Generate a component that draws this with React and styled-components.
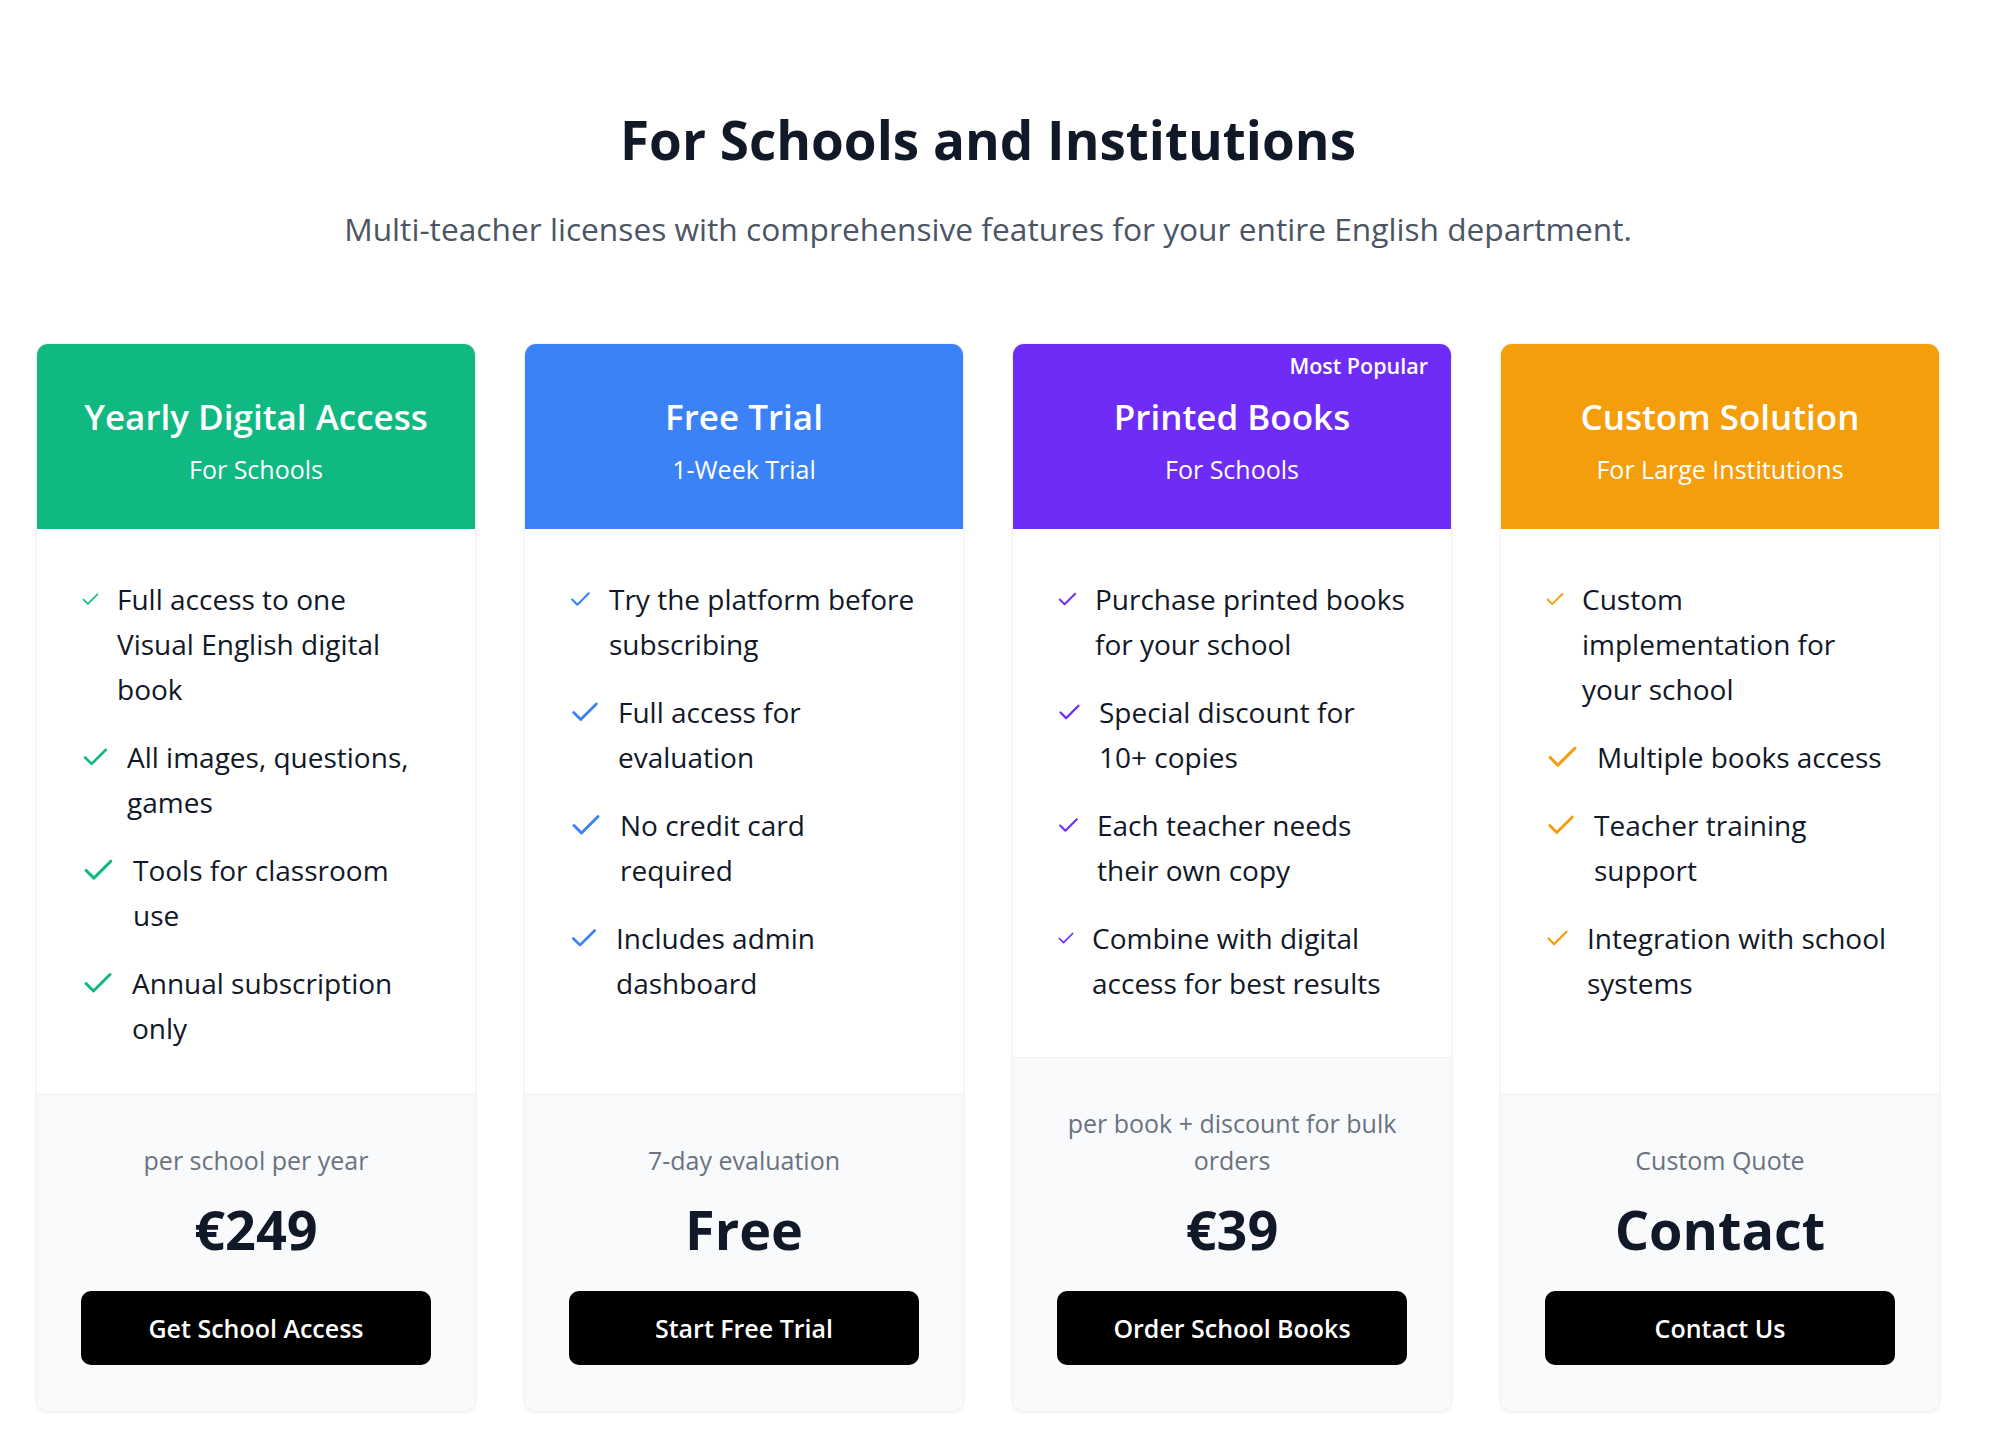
import React from 'react';
import styled, { createGlobalStyle } from 'styled-components';
import { Check } from 'lucide-react';

const GlobalStyle = createGlobalStyle`
    body {
        margin: 0;
        background: #ffffff;
        font-family: "Open Sans", "Noto Sans", sans-serif;
        color: #111827;
    }
`;

const StyledSection = styled.section`
    width: 1904px;
    margin-left: 36px;
    padding-top: 106px;
    padding-bottom: 46px;
`;
const StyledHeading = styled.h2`
    margin: 0;
    text-align: center;
    font-size: 53px;
    line-height: 67px;
    font-weight: 700;
    color: #111827;
`;
const StyledLead = styled.p`
    margin: 33px 0 0;
    text-align: center;
    font-size: 31.7px;
    line-height: 46px;
    color: #4b5563;
`;
const StyledGrid = styled.div`
    display: grid;
    grid-template-columns: repeat(4, 1fr);
    gap: 48px;
    margin-top: 91px;
`;
const StyledCard = styled.div`
    position: relative;
    display: flex;
    flex-direction: column;
    border-radius: 12px;
    overflow: hidden;
    background: #ffffff;
    border: 1px solid #f1f2f4;
    box-shadow: 0 1px 3px rgba(0, 0, 0, 0.06);
`;
const StyledCardHeader = styled.div`
    background: ${props => props.$color};
    color: #ffffff;
    text-align: center;
    padding: 49px 20px 42px;
`;
const StyledPlanName = styled.h3`
    margin: 0;
    font-size: 35px;
    line-height: 48px;
    font-weight: 600;
`;
const StyledAudience = styled.div`
    margin-top: 10px;
    font-size: 25px;
    line-height: 36px;
`;
const StyledBadge = styled.span`
    position: absolute;
    top: 7px;
    right: 23px;
    font-size: 21.5px;
    line-height: 30px;
    font-weight: 600;
    color: #ffffff;
`;
const StyledBody = styled.div`
    flex: 1;
    padding: 48px 45px 43px 43px;
`;
const StyledFeatures = styled.ul`
    list-style: none;
    margin: 0;
    padding: 0;
    display: flex;
    flex-direction: column;
    gap: 23px;
`;
const StyledFeature = styled.li`
    display: flex;
    align-items: flex-start;
    font-size: 28px;
    line-height: 45px;
    color: #111827;
`;
const StyledTick = styled(Check)`
    flex-shrink: 0;
    width: ${props => props.$size}px;
    height: 45px;
    margin-right: 16px;
    color: ${props => props.$color};
`;
const StyledFooter = styled.div`
    display: flex;
    flex-direction: column;
    align-items: center;
    text-align: center;
    background: #f9fafb;
    border-top: 1px solid #f1f2f4;
    padding: 47px 44px 46px;
`;
const StyledNote = styled.div`
    font-size: 25px;
    line-height: 37.5px;
    color: #6b7280;
`;
const StyledPrice = styled.div`
    margin-top: 21px;
    font-size: 54px;
    line-height: 56px;
    font-weight: 700;
    color: #111827;
`;
const StyledButton = styled.button`
    margin-top: 34px;
    width: 100%;
    height: 74px;
    border: none;
    border-radius: 10px;
    background: #000000;
    color: #ffffff;
    font-family: inherit;
    font-size: 25px;
    font-weight: 600;
    cursor: pointer;
`;

const plans = [
    {
        name: 'Yearly Digital Access',
        audience: 'For Schools',
        color: '#10b981',
        features: [
            ['Full access to one Visual English digital book', 21],
            ['All images, questions, games', 31],
            ['Tools for classroom use', 37],
            ['Annual subscription only', 36],
        ],
        note: 'per school per year',
        price: '€249',
        action: 'Get School Access',
    },
    {
        name: 'Free Trial',
        audience: '1-Week Trial',
        color: '#3b82f6',
        features: [
            ['Try the platform before subscribing', 25],
            ['Full access for evaluation', 34],
            ['No credit card required', 36],
            ['Includes admin dashboard', 32],
        ],
        note: '7-day evaluation',
        price: 'Free',
        action: 'Start Free Trial',
    },
    {
        name: 'Printed Books',
        audience: 'For Schools',
        color: '#6e2cf6',
        badge: 'Most Popular',
        features: [
            ['Purchase printed books for your school', 23],
            ['Special discount for 10+ copies', 27],
            ['Each teacher needs their own copy', 25],
            ['Combine with digital access for best results', 20],
        ],
        note: 'per book + discount for bulk orders',
        price: '€39',
        action: 'Order School Books',
    },
    {
        name: 'Custom Solution',
        audience: 'For Large Institutions',
        color: '#f59e0b',
        features: [
            ['Custom implementation for your school', 22],
            ['Multiple books access', 37],
            ['Teacher training support', 34],
            ['Integration with school systems', 27],
        ],
        note: 'Custom Quote',
        price: 'Contact',
        action: 'Contact Us',
    },
];

const PlanCard = ({ plan }) =>
    <StyledCard>
        <StyledCardHeader $color={plan.color}>
            {plan.badge && <StyledBadge>{plan.badge}</StyledBadge>}
            <StyledPlanName>{plan.name}</StyledPlanName>
            <StyledAudience>{plan.audience}</StyledAudience>
        </StyledCardHeader>
        <StyledBody>
            <StyledFeatures>
                {plan.features.map(([text, size]) =>
                    <StyledFeature key={text}>
                        <StyledTick $size={size} $color={plan.color} strokeWidth={2} />
                        <span>{text}</span>
                    </StyledFeature>
                )}
            </StyledFeatures>
        </StyledBody>
        <StyledFooter>
            <StyledNote>{plan.note}</StyledNote>
            <StyledPrice>{plan.price}</StyledPrice>
            <StyledButton>{plan.action}</StyledButton>
        </StyledFooter>
    </StyledCard>;

const App = () =>
    <>
        <GlobalStyle />
        <StyledSection>
            <StyledHeading>{'For Schools and Institutions'}</StyledHeading>
            <StyledLead>{'Multi-teacher licenses with comprehensive features for your entire English department.'}</StyledLead>
            <StyledGrid>
                {plans.map(plan => <PlanCard key={plan.name} plan={plan} />)}
            </StyledGrid>
        </StyledSection>
    </>;
export default App;
